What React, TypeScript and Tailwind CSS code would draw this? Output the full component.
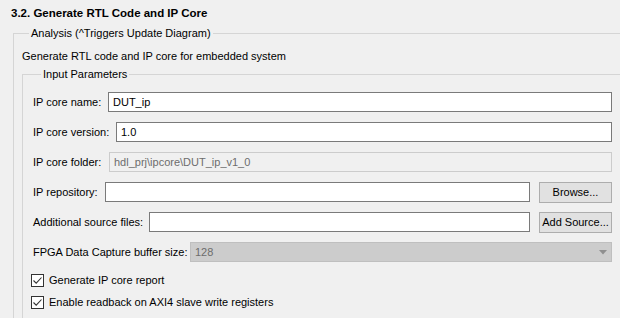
import React from "react";

const font = { fontFamily: '"Liberation Sans", Arial, sans-serif' };

function TextRow({
  label,
  labelW,
  value,
  disabled,
  button,
}: {
  label: string;
  labelW: string;
  value?: string;
  disabled?: boolean;
  button?: string;
}) {
  return (
    <div className="flex items-center h-[20px]">
      <span className={`whitespace-nowrap shrink-0 ${labelW}`}>{label}</span>
      <div
        className={`flex-1 h-[20px] flex items-center px-[4px] border ${
          disabled
            ? "bg-[#f0f0f0] border-[#cccccc] text-[#6d6d6d]"
            : "bg-white border-[#7a7a7a]"
        }`}
      >
        {value}
      </div>
      {button && (
        <button className="ml-[9px] w-[73px] h-[21px] bg-[#e1e1e1] border border-[#adadad] leading-none whitespace-nowrap">
          {button}
        </button>
      )}
    </div>
  );
}

function Check({ label }: { label: string }) {
  return (
    <div className="flex items-center h-[16px] gap-[5px] -ml-[2px]">
      <div className="w-[13px] h-[13px] bg-white border border-[#333333] flex items-center justify-center">
        <svg width="11" height="11" viewBox="0 0 11 11">
          <path d="M1.5 5.5 L4.2 8.2 L9.5 2.5" stroke="#333" strokeWidth="1.1" fill="none" />
        </svg>
      </div>
      <span>{label}</span>
    </div>
  );
}

export default function App() {
  return (
    <div
      className="w-[620px] h-[318px] overflow-hidden bg-[#f0f0f0] text-[11px] leading-[16px] text-[#000]"
      style={font}
    >
      <div className="pt-[5px] pl-[11px] font-bold text-[11.5px]">
        3.2. Generate RTL Code and IP Core
      </div>

      <fieldset className="mt-[4px] ml-[13px] -mr-[10px] border border-[#d5d5d5] pl-[8px]">
        <legend className="ml-[7px] px-[2px]">Analysis (^Triggers Update Diagram)</legend>

        <div className="mt-[7px]">Generate RTL code and IP core for embedded system</div>

        <fieldset className="mt-[2px] border border-[#d5d5d5] pl-[10px] pr-[16px] pb-[10px]">
          <legend className="ml-[8px] px-[2px]">Input Parameters</legend>

          <div className="pt-[10px] flex flex-col gap-[10px]">
            <TextRow label="IP core name:" labelW="w-[75px]" value="DUT_ip" />
            <TextRow label="IP core version:" labelW="w-[83px]" value="1.0" />
            <TextRow
              label="IP core folder:"
              labelW="w-[76px]"
              value="hdl_prj\ipcore\DUT_ip_v1_0"
              disabled
            />
            <TextRow label="IP repository:" labelW="w-[72px]" button="Browse..." />
            <TextRow label="Additional source files:" labelW="w-[116px]" button="Add Source..." />
            <div className="flex items-center h-[20px]">
              <span className="whitespace-nowrap shrink-0 w-[157px]">FPGA Data Capture buffer size:</span>
              <div className="flex-1 h-[20px] flex items-center justify-between px-[4px] bg-[#cccccc] border border-[#bfbfbf] text-[#6d6d6d]">
                <span>128</span>
                <svg width="8" height="5" viewBox="0 0 8 5">
                  <path d="M0 0 H8 L4 4.5 Z" fill="#8f8f8f" />
                </svg>
              </div>
            </div>
          </div>

          <div className="mt-[10px] flex flex-col gap-[6px]">
            <Check label="Generate IP core report" />
            <Check label="Enable readback on AXI4 slave write registers" />
          </div>
        </fieldset>
      </fieldset>
    </div>
  );
}
